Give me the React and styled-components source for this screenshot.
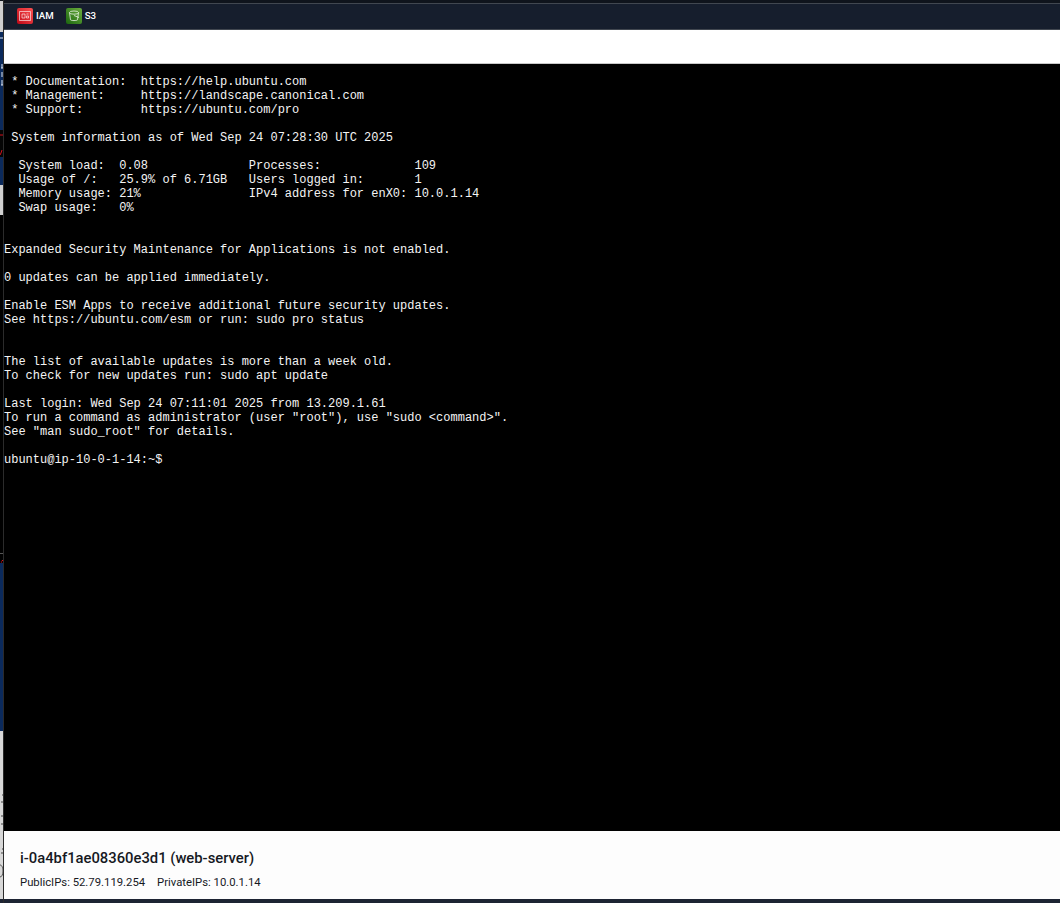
import React from "react";
import styled, { createGlobalStyle } from "styled-components";

const Global = createGlobalStyle`
  html, body { margin: 0; padding: 0; background: #000; }
  #root { width: 1060px; height: 903px; overflow: hidden; }
`;

const Page = styled.div`
  display: flex;
  width: 1060px;
  height: 903px;
  overflow: hidden;
`;

const Strip = styled.div`
  display: flex;
  flex-direction: column;
  flex: 0 0 3px;
  height: 903px;
`;

const StripPart = styled.div`
  flex: 0 0 ${(p) => p.$h}px;
  background: ${(p) => p.$bg};
  svg { display: block; }
`;

const Divider = styled.div`
  flex: 0 0 1px;
  background: ${(p) => p.$c || "#2b2b2b"};
  height: 903px;
`;

const Main = styled.div`
  flex: 1;
  display: flex;
  flex-direction: column;
  height: 903px;
  min-width: 0;
`;

const TopEdge = styled.div`
  flex: 0 0 3px;
  background: #0f141c;
`;

const FavBar = styled.div`
  flex: 0 0 27px;
  box-sizing: border-box;
  display: flex;
  align-items: center;
  gap: 12px;
  padding: 0 0 1px 13px;
  background: #161e2d;
  border-top: 1px solid #414750;
  border-bottom: 1px solid #414750;
`;

const Fav = styled.div`
  display: flex;
  align-items: center;
  gap: 3px;
  color: #fff;
  font: 500 9.7px/14px Roboto, "Liberation Sans", sans-serif;
`;

const ServiceIcon = styled.span`
  display: block;
  width: 16px;
  height: 16px;
  border-radius: 2px;
  background: linear-gradient(45deg, ${(p) => p.$from}, ${(p) => p.$to});
  svg { display: block; }
`;

const WhiteBand = styled.div`
  flex: 0 0 34px;
  box-sizing: border-box;
  background: #fff;
  border-bottom: 1px solid #c9c9c9;
`;

const Terminal = styled.pre`
  flex: 1;
  margin: 0;
  padding: 11px 0 0;
  background: #000;
  color: #f4f4f4;
  font: 400 12px/14px "Liberation Mono", "Courier New", monospace;
  white-space: pre;
  overflow: hidden;
`;

const Footer = styled.div`
  flex: 0 0 68px;
  box-sizing: border-box;
  padding: 18px 16px 0;
  background: #fdfdfd;
  color: #16191f;
`;

const Title = styled.div`
  font: 500 14.8px/18px Roboto, "Liberation Sans", sans-serif;
`;

const IpRow = styled.div`
  display: flex;
  gap: 12px;
  margin-top: 8px;
  font: 400 11.3px/16px Roboto, "Liberation Sans", sans-serif;
`;

const BottomEdge = styled.div`
  flex: 0 0 4px;
  background: #1d2433;
`;

const text = `
 * Documentation:  https://help.ubuntu.com
 * Management:     https://landscape.canonical.com
 * Support:        https://ubuntu.com/pro

 System information as of Wed Sep 24 07:28:30 UTC 2025

  System load:  0.08              Processes:             109
  Usage of /:   25.9% of 6.71GB   Users logged in:       1
  Memory usage: 21%               IPv4 address for enX0: 10.0.1.14
  Swap usage:   0%


Expanded Security Maintenance for Applications is not enabled.

0 updates can be applied immediately.

Enable ESM Apps to receive additional future security updates.
See https://ubuntu.com/esm or run: sudo pro status


The list of available updates is more than a week old.
To check for new updates run: sudo apt update

Last login: Wed Sep 24 07:11:01 2025 from 13.209.1.61
To run a command as administrator (user "root"), use "sudo <command>".
See "man sudo_root" for details.

ubuntu@ip-10-0-1-14:~$ `.slice(1);

export default function App() {
  return (
    <Page>
      <Global />
      <Strip>
        <StripPart $h={1} $bg="#10151d" />
        <StripPart $h={31} $bg="#cfcfcf" />
        <StripPart $h={98} $bg="#0b2a5c">
          <svg width="3" height="98" viewBox="0 0 3 98">
            <path d="M0 6h3M2 32v4M1 36h2M2 40v5M2 48v5M1 53h2" stroke="#dfe6f0" strokeWidth="1" fill="none" />
          </svg>
        </StripPart>
        <StripPart $h={27} $bg="#050505">
          <svg width="3" height="27" viewBox="0 0 3 27">
            <path d="M0 5h3M2 20l-1 3-1 2" stroke="#d5101c" strokeWidth="1" fill="none" />
          </svg>
        </StripPart>
        <StripPart $h={28} $bg="#0b2a5c" />
        <StripPart $h={30} $bg="#cfcfcf" />
        <StripPart $h={338} $bg="#000" />
        <StripPart $h={1} $bg="#555" />
        <StripPart $h={9} $bg="#000">
          <svg width="3" height="9" viewBox="0 0 3 9">
            <path d="M2.5 6v1M1.5 7.5v1" stroke="#e2101c" strokeWidth="1.2" fill="none" />
          </svg>
        </StripPart>
        <StripPart $h={168} $bg="#0b2a5c" />
        <StripPart $h={168} $bg="#d8d8d8">
          <svg width="3" height="168" viewBox="0 0 3 168">
            <path d="M2 64h1M1 71h2M1 85h2M1 93h2M2 118h1M1 122h2" stroke="#444" strokeWidth="1" fill="none" />
            <path d="M0 134c2 0 3 3 3 6s-1 6-3 6" stroke="#555" strokeWidth="1" fill="none" />
          </svg>
        </StripPart>
        <StripPart $h={4} $bg="#1d2433" />
      </Strip>
      <Divider />
      <Main>
        <TopEdge />
        <FavBar>
          <Fav>
            <ServiceIcon $from="#bd0816" $to="#ff5252">
              <svg width="16" height="16" viewBox="0 0 16 16" fill="none" stroke="#fff" strokeOpacity="0.6" strokeWidth="1">
                <path d="M2.5 3.5h11v9h-11zM5 6h3v4H5zM9.5 6h2M9.5 8h2v2h-2z" />
              </svg>
            </ServiceIcon>
            IAM
          </Fav>
          <Fav>
            <ServiceIcon $from="#1b660f" $to="#6cae3e">
              <svg width="16" height="16" viewBox="0 0 16 16" fill="none" stroke="#fff" strokeOpacity="0.7" strokeWidth="1">
                <ellipse cx="8" cy="4.6" rx="4.5" ry="1.6" />
                <path d="M3.5 4.6l1 7.2c.3 1 6.7 1 7 0l1-7.2M8 7.5l5 2" />
              </svg>
            </ServiceIcon>
            S3
          </Fav>
        </FavBar>
        <WhiteBand />
        <Terminal>{text}</Terminal>
        <Footer>
          <Title>i-0a4bf1ae08360e3d1 (web-server)</Title>
          <IpRow>
            <span>PublicIPs: 52.79.119.254</span>
            <span>PrivateIPs: 10.0.1.14</span>
          </IpRow>
        </Footer>
        <BottomEdge />
      </Main>
    </Page>
  );
}
